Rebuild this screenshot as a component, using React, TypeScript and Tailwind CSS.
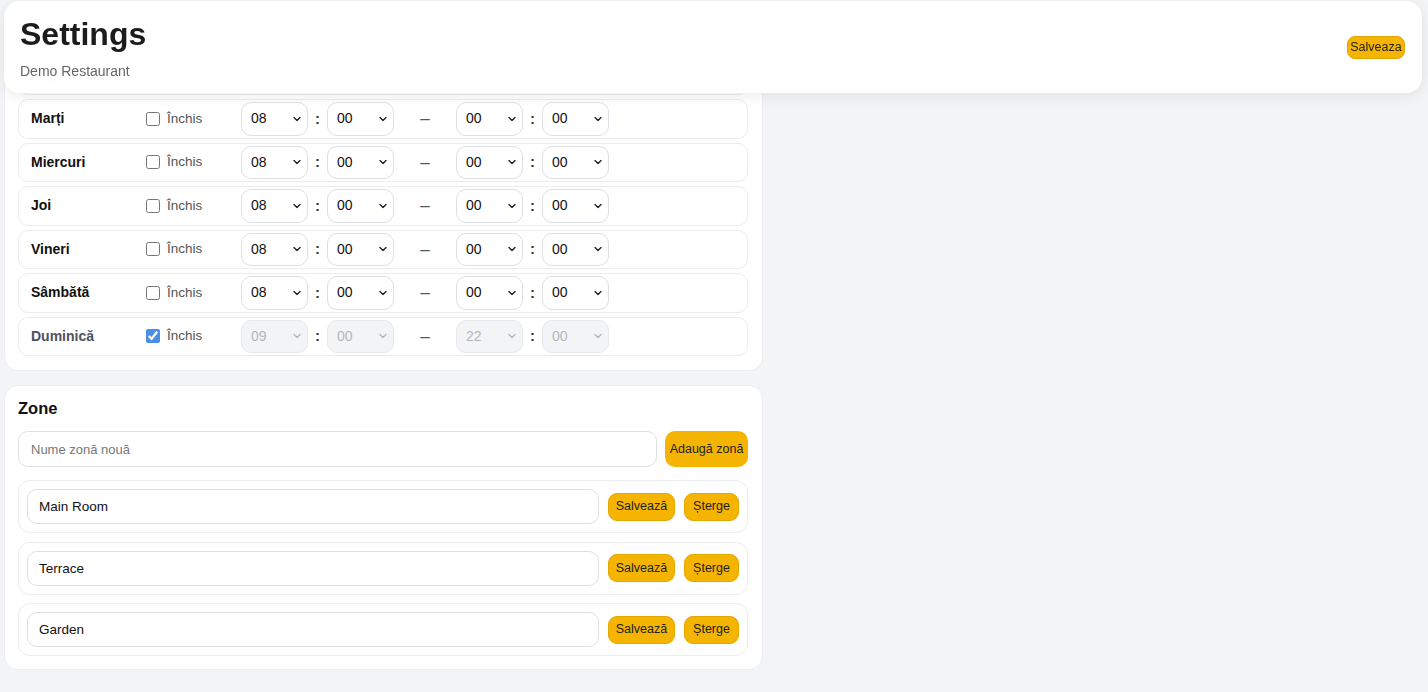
import React from "react";

const days = [
  { name: "Luni", open: "08", openM: "00", close: "00", closeM: "00", closed: false },
  { name: "Marți", open: "08", openM: "00", close: "00", closeM: "00", closed: false },
  { name: "Miercuri", open: "08", openM: "00", close: "00", closeM: "00", closed: false },
  { name: "Joi", open: "08", openM: "00", close: "00", closeM: "00", closed: false },
  { name: "Vineri", open: "08", openM: "00", close: "00", closeM: "00", closed: false },
  { name: "Sâmbătă", open: "08", openM: "00", close: "00", closeM: "00", closed: false },
  { name: "Duminică", open: "09", openM: "00", close: "22", closeM: "00", closed: true },
];

const zones = ["Main Room", "Terrace", "Garden"];

function Sel({ value, disabled }: { value: string; disabled: boolean }) {
  return (
    <div className="relative w-[67px] h-[33.5px] shrink-0">
      <select
        disabled={disabled}
        defaultValue={value}
        className={
          disabled
            ? "appearance-none w-full h-full rounded-[10px] border border-[#e6e8eb] bg-[#f3f4f6] pl-[9px] text-[14px] text-[#b3b7bd] outline-none"
            : "appearance-none w-full h-full rounded-[10px] border border-[#dcdfe4] bg-white pl-[9px] text-[14px] text-[#111] outline-none"
        }
      >
        <option value={value}>{value}</option>
      </select>
      <svg
        className="pointer-events-none absolute right-[7px] top-1/2 -translate-y-1/2"
        width="8"
        height="5"
        viewBox="0 0 8 5"
      >
        <path
          d="M1 1l3 3 3-3"
          fill="none"
          stroke={disabled ? "#b3b7bd" : "#222"}
          strokeWidth="1.4"
          strokeLinecap="round"
          strokeLinejoin="round"
        />
      </svg>
    </div>
  );
}

function DayRow({ d }: { d: (typeof days)[number] }) {
  return (
    <div className="flex items-center h-[39.5px] px-3 rounded-[10px] border border-[#eaecef] bg-white">
      <div
        className={
          d.closed
            ? "w-[115px] shrink-0 text-[14px] font-bold text-[#4b5260]"
            : "w-[115px] shrink-0 text-[14px] font-bold text-[#111]"
        }
      >
        {d.name}
      </div>
      <label className="w-[95px] shrink-0 flex items-center gap-[7px] text-[13.5px] text-[#555]">
        <input
          type="checkbox"
          defaultChecked={d.closed}
          className="m-0 w-[14px] h-[14px] accent-[#4a8fe7]"
        />
        <span>Închis</span>
      </label>
      <Sel value={d.open} disabled={d.closed} />
      <div className="w-[19px] text-center text-[15px] font-bold text-[#333]">:</div>
      <Sel value={d.openM} disabled={d.closed} />
      <div className="w-[62px] text-center text-[17px] text-[#555]">–</div>
      <Sel value={d.close} disabled={d.closed} />
      <div className="w-[19px] text-center text-[15px] font-bold text-[#333]">:</div>
      <Sel value={d.closeM} disabled={d.closed} />
    </div>
  );
}

export default function App() {
  return (
    <div className="relative h-screen overflow-hidden bg-[#f3f4f6] font-['Liberation_Sans',Arial,sans-serif]">
      <div className="h-full flex flex-col justify-end pb-[22px] pl-[4px]">
        <div className="w-[759px] flex flex-col gap-[14px]">
          <div className="rounded-[14px] bg-white border border-[#eceef1] pl-[13px] pr-[14px] pt-[13px] pb-[14px]">
            <div className="h-[24px] mb-3" />
            <div className="flex flex-col gap-[4px]">
              {days.map((d) => (
                <DayRow key={d.name} d={d} />
              ))}
            </div>
          </div>

          <div className="rounded-[14px] bg-white border border-[#eceef1] pl-[13px] pr-[14px] py-[13px]">
            <div className="text-[16.5px] font-bold leading-[18px] text-[#111] mb-[14px]">Zone</div>
            <div className="flex gap-[8px]">
              <input
                placeholder="Nume zonă nouă"
                className="flex-1 h-[36px] rounded-[10px] border border-[#dcdfe4] px-3 text-[13px] text-[#111] placeholder:text-[#777] outline-none"
              />
              <button className="w-[83px] h-[36px] rounded-[10px] bg-[#f4b400] text-[12.5px] text-[#222]">
                Adaugă zonă
              </button>
            </div>
            <div className="mt-[13px] flex flex-col gap-[8.5px]">
              {zones.map((z) => (
                <div
                  key={z}
                  className="h-[53px] flex items-center gap-[9px] px-[8px] rounded-[12px] border border-[#eaecef]"
                >
                  <input
                    defaultValue={z}
                    className="flex-1 h-[35px] rounded-[10px] border border-[#dcdfe4] px-[11px] text-[13.5px] text-[#111] outline-none"
                  />
                  <button className="w-[67px] h-[28px] rounded-[9px] bg-[#f4b400] border border-[#e3a800] text-[12.5px] text-[#222]">
                    Salvează
                  </button>
                  <button className="w-[55px] h-[28px] rounded-[9px] bg-[#f4b400] border border-[#e3a800] text-[12.5px] text-[#222]">
                    Șterge
                  </button>
                </div>
              ))}
            </div>
          </div>
        </div>
      </div>

      <header className="fixed top-[1px] left-[4px] right-[6px] h-[92px] rounded-[16px] bg-white/95 backdrop-blur-md shadow-[0_3px_14px_rgba(0,0,0,0.08)] flex items-center justify-between pl-4 pr-[17px]">
        <div className="flex flex-col">
          <h1 className="text-[32px] leading-[38px] font-bold text-[#1c1c1c]">Settings</h1>
          <div className="mt-[9px] text-[14px] leading-[18px] text-[#666]">Demo Restaurant</div>
        </div>
        <button className="w-[58px] h-[23px] rounded-[8px] bg-[#f4b400] border border-[#dfa600] text-[12.5px] text-[#222]">
          Salveaza
        </button>
      </header>
    </div>
  );
}
